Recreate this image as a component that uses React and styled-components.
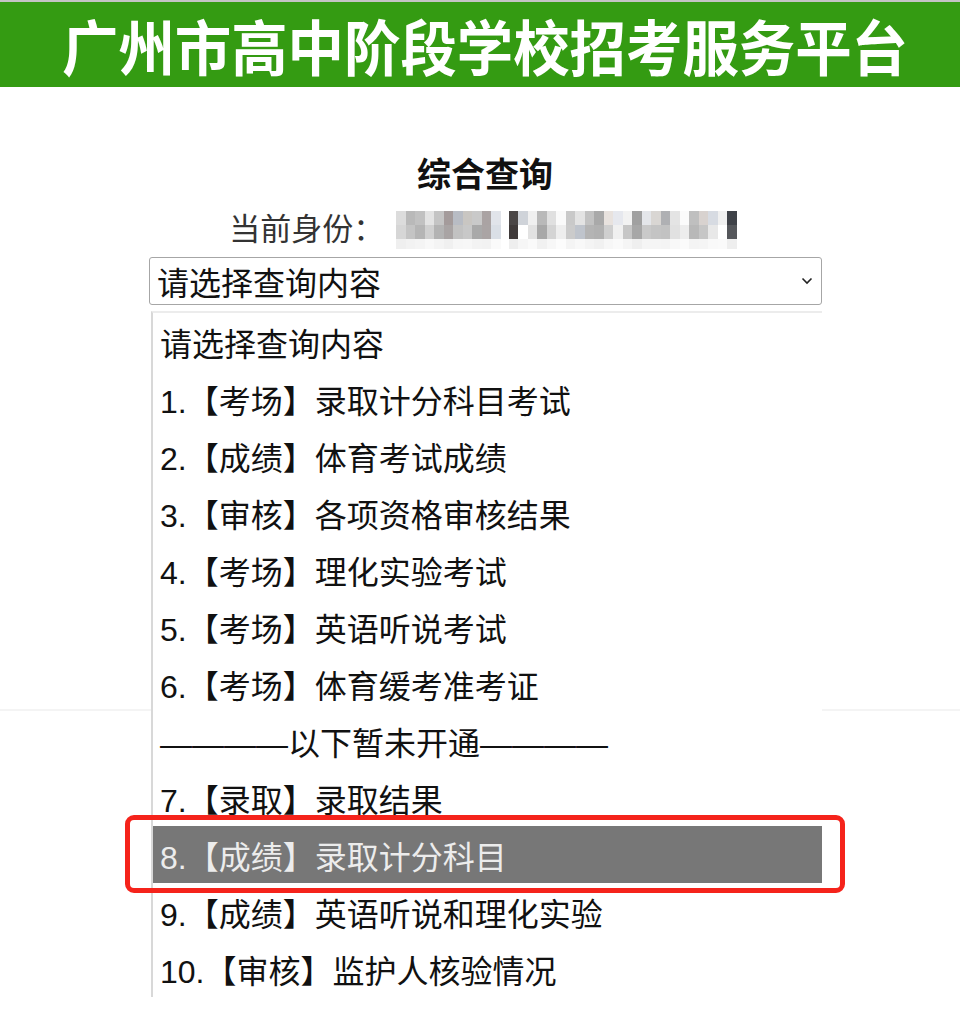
import styled, { createGlobalStyle } from "styled-components";

const GlobalStyle = createGlobalStyle`
  body {
    margin: 0;
    background: #fff;
    font-family: "Liberation Sans", "Noto Sans CJK SC", sans-serif;
    color: #111;
  }
`;

const Page = styled.div`
  width: 960px;
  min-height: 1014px;
  overflow: hidden;
  border-top: 2px solid #c4c4c4;
  box-sizing: border-box;
`;

const Header = styled.header`
  height: 85px;
  display: flex;
  align-items: center;
  justify-content: center;
  background: #349b12;

  h1 {
    margin: 0 0 0 10px;
    color: #fff;
    font-family: "Noto Sans CJK SC", sans-serif;
    font-size: 60px;
    font-weight: 700;
    line-height: 1;
    transform: scaleX(0.94);
  }
`;

const Main = styled.main`
  display: flex;
  flex-direction: column;
  align-items: center;
  padding-top: 66px;
`;

const Title = styled.h2`
  margin: 0 0 0 10px;
  font-family: "Noto Sans CJK SC", sans-serif;
  font-size: 34px;
  font-weight: 700;
  line-height: 40px;
  color: #111;
`;

const Identity = styled.div`
  margin-top: 14px;
  display: flex;
  align-items: center;
  height: 38px;
  margin-left: 6px;

  .label {
    font-family: "Noto Sans CJK SC", sans-serif;
    font-size: 31px;
    color: #333;
    margin-right: 12px;
  }
`;

const Mosaic = styled.div`
  display: grid;
  grid-template-rows: 14px 14px 10px;
  grid-auto-flow: column;
  grid-auto-columns: 9.5px;
  margin-top: 8px;
  filter: blur(0.6px);
`;

const Tile = styled.span`
  background: ${({ $c }) => $c};
`;

const MosaicGap = styled.span`
  width: 8px;
`;

const SelectWrap = styled.div`
  position: relative;
  margin-top: 12px;
  margin-left: 11px;
  width: 673px;
`;

const SelectBox = styled.div`
  height: 48px;
  box-sizing: border-box;
  border: 1px solid #a6a6a6;
  border-radius: 3px;
  display: flex;
  align-items: center;
  justify-content: space-between;
  padding: 0 8px 0 7px;
  font-family: "Noto Sans CJK SC", sans-serif;
  font-size: 32px;
  color: #111;
  background: #fff;
`;

const Dropdown = styled.ul`
  position: absolute;
  top: 54px;
  left: 2px;
  width: 671px;
  margin: 0;
  padding: 0;
  list-style: none;
  box-sizing: border-box;
  background: #fff;
  border-top: 2px solid #ececec;
  border-left: 2px solid #d8d8d8;
  z-index: 2;
`;

const Option = styled.li`
  position: relative;
  height: 57px;
  display: flex;
  align-items: center;
  padding-left: 7px;
  font-size: 32px;
  font-family: "Liberation Sans", "Noto Sans CJK SC", sans-serif;
  color: ${({ $active }) => ($active ? "#ececec" : "#111")};
  background: ${({ $active }) => ($active ? "#777777" : "transparent")};
  white-space: nowrap;
`;

const Highlight = styled.span`
  position: absolute;
  top: -11px;
  bottom: -10px;
  left: -28px;
  right: -23px;
  border: 5px solid #f5231b;
  border-radius: 9px;
  pointer-events: none;
`;

const Divider = styled.div`
  width: 100%;
  margin-top: 404px;
  border-top: 2px solid #f4f4f4;
`;

const shadesA = [
  ["#dcdcdc", "#d6d6d6", "#efefef"],
  ["#b9b9b9", "#c4c4c4", "#f2f2f2"],
  ["#c1c1c1", "#b5b5b5", "#f4f4f4"],
  ["#e3e3e3", "#d0d0d0", "#f8f8f8"],
  ["#c4c4c4", "#b3b3b3", "#f4f4f4"],
  ["#a49b9b", "#a9a4a4", "#f0f0f0"],
  ["#b8bcc4", "#c2c2c2", "#f6f6f6"],
  ["#c9c6c2", "#c8c8c8", "#f7f7f7"],
  ["#c9c9c9", "#a9a9a9", "#f3f3f3"],
  ["#aaa3a3", "#aaa4a4", "#f2f2f2"],
  ["#e1e4ea", "#dadfe6", "#fafafa"],
];

const shadesB = [
  ["#4a4646", "#3f3a3a", "#eeeeee"],
  ["#cfd3d9", "#ffffff", "#f6f6f6"],
  ["#f0f0f0", "#e2e2e2", "#fafafa"],
  ["#b9b9b9", "#a8a8a8", "#f1f1f1"],
  ["#e0e0e0", "#d4d4d4", "#f7f7f7"],
  ["#fafafa", "#eeeeee", "#fcfcfc"],
  ["#c9c9c9", "#cbcbcb", "#f4f4f4"],
  ["#e3e3e3", "#bfc4cc", "#f8f8f8"],
  ["#c2c2c2", "#b4b4b4", "#f4f4f4"],
  ["#a9a9a9", "#b1b1b1", "#f1f1f1"],
  ["#e8e2de", "#cfcfcf", "#f7f7f7"],
  ["#e6e8ee", "#f0f0f0", "#fafafa"],
  ["#f2f2f2", "#c6c6c6", "#f5f5f5"],
  ["#a0a0a0", "#a7a7a7", "#efefef"],
  ["#e4e6ea", "#c9c9c9", "#f5f5f5"],
  ["#d9d6d3", "#c4c4c4", "#f5f5f5"],
  ["#afb0b3", "#c2c2c2", "#f4f4f4"],
  ["#e4e4e4", "#e1e1e1", "#f8f8f8"],
  ["#fbfbfb", "#ededed", "#fbfbfb"],
  ["#bfbfbf", "#b8b8b8", "#f4f4f4"],
  ["#d8d2cf", "#c6c6c6", "#f5f5f5"],
  ["#d7dbe2", "#e8e8e8", "#f9f9f9"],
  ["#f0f0f0", "#ffffff", "#fafafa"],
  ["#3f4248", "#55575b", "#eeeeee"],
];

const options = [
  "请选择查询内容",
  "1.【考场】录取计分科目考试",
  "2.【成绩】体育考试成绩",
  "3.【审核】各项资格审核结果",
  "4.【考场】理化实验考试",
  "5.【考场】英语听说考试",
  "6.【考场】体育缓考准考证",
  "————以下暂未开通————",
  "7.【录取】录取结果",
  "8.【成绩】录取计分科目",
  "9.【成绩】英语听说和理化实验",
  "10.【审核】监护人核验情况",
];

function Chevron() {
  return (
    <svg width="12" height="8" viewBox="0 0 12 8">
      <path d="M1.5 1.5 L6 6 L10.5 1.5" fill="none" stroke="#222" strokeWidth="1.6" />
    </svg>
  );
}

function App() {
  return (
    <Page>
      <GlobalStyle />
      <Header>
        <h1>广州市高中阶段学校招考服务平台</h1>
      </Header>

      <Main>
        <Title>综合查询</Title>

        <Identity>
          <span className="label">当前身份：</span>
          <Mosaic>
            {shadesA.flat().map((c, i) => (
              <Tile key={"a" + i} $c={c} />
            ))}
          </Mosaic>
          <MosaicGap />
          <Mosaic>
            {shadesB.flat().map((c, i) => (
              <Tile key={"b" + i} $c={c} />
            ))}
          </Mosaic>
        </Identity>

        <SelectWrap>
          <SelectBox>
            <span>请选择查询内容</span>
            <Chevron />
          </SelectBox>

          <Dropdown>
            {options.map((text, i) => (
              <Option key={text} $active={i === 9}>
                {text}
                {i === 9 && <Highlight />}
              </Option>
            ))}
          </Dropdown>
        </SelectWrap>

        <Divider />
      </Main>
    </Page>
  );
}

export default App;
